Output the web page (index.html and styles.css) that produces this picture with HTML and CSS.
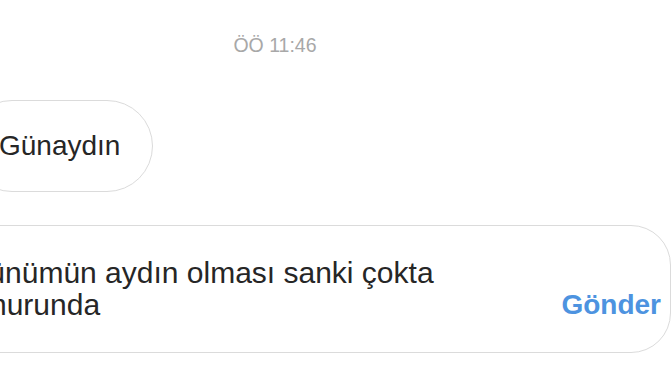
FILE: index.html
```html
<!DOCTYPE html>
<html lang="tr">
<head>
  <meta charset="UTF-8" />
  <meta name="viewport" content="width=device-width, initial-scale=1.0" />
  <title>Mesajlar</title>
  <link rel="stylesheet" href="styles.css">
</head>
<body>
  <main class="thread">
    <p class="time">ÖÖ 11:46</p>
    <div class="row">
      <div class="bubble">Günaydın</div>
    </div>
  </main>

  <footer class="composer">
    <div class="field">
      <p class="draft">Günümün aydın olması sanki çokta umurunda</p>
      <button class="send">Gönder</button>
    </div>
  </footer>
</body>
</html>
```

FILE: styles.css
```css
body {
  margin: 0;
  font-family: "Liberation Sans", Arial, sans-serif;
  background-color: #fff;
  color: #262626;
  overflow: hidden;
}

.thread {
  margin-left: -34px;
  width: 618px;
}

.time {
  margin: 0;
  padding-top: 34px;
  font-size: 19.5px;
  line-height: 23px;
  color: #a8a8a8;
  text-align: center;
}

.row {
  margin-top: 43px;
  display: flex;
}

.bubble {
  padding: 0 32px;
  font-size: 28px;
  line-height: 90px;
  border: 1px solid #dbdbdb;
  border-radius: 46px;
}

.composer {
  margin-top: 33px;
  padding-right: 1px;
}

.field {
  margin-left: -65px;
  display: flex;
  align-items: flex-end;
  gap: 12px;
  padding: 31px 9px 31px 29px;
  border: 1px solid #dbdbdb;
  border-radius: 40px;
}

.draft {
  flex: 1;
  margin: 0;
  font-size: 30px;
  line-height: 32px;
}

.send {
  padding: 0;
  border: none;
  background: none;
  font-family: inherit;
  font-size: 28px;
  font-weight: bold;
  line-height: 32px;
  color: #4d93e0;
  cursor: pointer;
}
```
